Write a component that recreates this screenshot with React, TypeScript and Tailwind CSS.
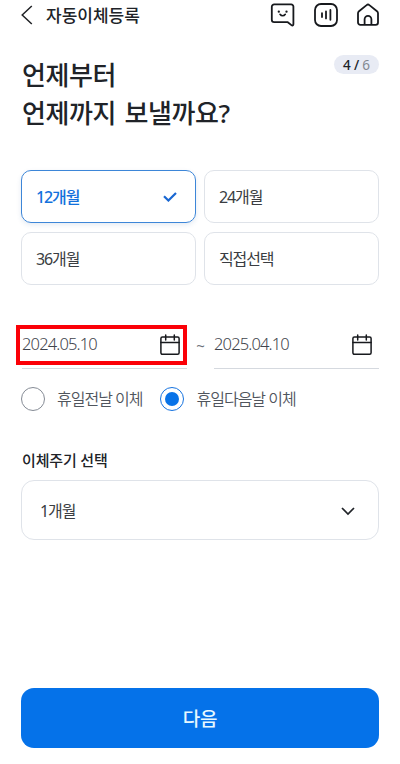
import React, { useState } from 'react';
import clsx from 'clsx';

const PERIODS = ['12개월', '24개월', '36개월', '직접선택'];

const HOLIDAY_OPTIONS = [
  { id: 'before', label: '휴일전날 이체' },
  { id: 'after', label: '휴일다음날 이체' }
];

const BackIcon = () => (
  <svg width="14" height="20" viewBox="0 0 14 20" fill="none" stroke="#202226" strokeWidth="1.5">
    <path d="M10.8 1 1.2 10l9.6 9" />
  </svg>
);

const ChatIcon = () => (
  <svg width="26" height="24" viewBox="0 0 26 24" fill="none" stroke="#17191d" strokeWidth="1.8" strokeLinecap="round" strokeLinejoin="round">
    <path d="M4.2 1.4h17a2.2 2.2 0 0 1 2.2 2.2v17.6c0 1.3-1 1.7-2 .9l-3.6-2.9H4.2a2.4 2.4 0 0 1-2.4-2.4v-13a2.4 2.4 0 0 1 2.4-2.4Z" />
    <path d="M10 11.3c1.4 2 3.9 2 5.3 0" strokeWidth="1.6" />
    <path d="M8.8 8.7h.01M16.5 8.7h.01" strokeWidth="2.3" />
  </svg>
);

const VoiceIcon = () => (
  <svg width="24" height="24" viewBox="0 0 24 24" fill="none" stroke="#17191d" strokeWidth="1.8" strokeLinecap="round">
    <rect x="1" y="1" width="22" height="22" rx="6" />
    <path d="M8 10.2V14M12 8.4v7M16.4 7v9.8" />
  </svg>
);

const HomeIcon = () => (
  <svg width="24" height="24" viewBox="0 0 24 24" fill="none" stroke="#17191d" strokeWidth="1.8" strokeLinejoin="round">
    <path d="M2 10.2c0-.8.4-1.5 1-2l7.6-6.1c.8-.7 2-.7 2.8 0L21 8.2c.6.5 1 1.2 1 2v9.3a2.3 2.3 0 0 1-2.3 2.3H4.3A2.3 2.3 0 0 1 2 19.5Z" />
    <path d="M8.6 21.5v-5.2a3.4 3.4 0 0 1 6.8 0v5.2" />
  </svg>
);

const CalendarIcon = () => (
  <svg width="20" height="22" viewBox="0 0 20 22" fill="none" stroke="#17191d" strokeWidth="1.5" strokeLinecap="round">
    <rect x="0.9" y="3" width="18.2" height="17.3" rx="1.5" />
    <path d="M.9 8.5h18.2M5.7 1v5M14.3 1v5" />
  </svg>
);

const DateField = ({ value }: { value: string }) => (
  <button className="flex h-12 w-[165px] items-center justify-between border-b border-[#d5d9df] pr-[7px] text-left">
    <span className="text-[16.5px] font-light tracking-[-0.85px] text-[#3f444c]">{value}</span>
    <CalendarIcon />
  </button>
);

export default function App() {
  const [period, setPeriod] = useState('12개월');
  const [holiday, setHoliday] = useState('after');

  return (
    <div className="flex h-[764px] w-[400px] flex-col overflow-hidden bg-white font-['Noto_Sans','Noto_Sans_CJK_KR',sans-serif] text-[#202328]">
      {/* Header */}
      <header className="flex h-[30px] items-center justify-between pr-5 pl-[21px]">
        <div className="flex items-center gap-[11px]">
          <BackIcon />
          <h1 className="pt-0.5 text-[17px] leading-6 font-medium">자동이체등록</h1>
        </div>
        <div className="flex items-center gap-[18px]">
          <ChatIcon />
          <VoiceIcon />
          <HomeIcon />
        </div>
      </header>

      {/* Title */}
      <section className="flex items-start justify-between pt-[25px] pr-[21px] pl-[22px]">
        <h2 className="pt-px text-[26px] leading-[38px] font-medium tracking-[-0.4px] [word-spacing:2px]">
          언제부터
          <br />
          언제까지 보낼까요?
        </h2>
        <span className="flex h-[19px] w-[45px] items-center justify-center rounded-full bg-[#e8ebf4] pt-px text-[13.5px]">
          <span className="font-medium tracking-[-0.2px] whitespace-pre">4 / </span>
          <span className="font-normal text-[#858991]">6</span>
        </span>
      </section>

      {/* Period */}
      <section className="mt-[38px] grid grid-cols-2 gap-x-2 gap-y-[9px] px-[21px]">
        {PERIODS.map((item) => (
          <button
            key={item}
            onClick={() => setPeriod(item)}
            className={clsx(
              'flex h-[53px] items-center justify-between rounded-[10px] border pr-[18px] pl-[14px] text-[16px] tracking-[-1.1px]',
              period === item
                ? 'border-[#3d86d8] font-medium text-[#1271dc] shadow-[0_2px_5px_rgba(30,80,150,0.12)]'
                : 'border-[#dfe3e9] font-normal text-[#3a3d42]'
            )}
          >
            {item}
            {period === item && (
              <svg width="14" height="10" viewBox="0 0 14 10" fill="none" stroke="#1967d2" strokeWidth="2.2">
                <path d="m1 4.2 4.4 4.3L13 1" />
              </svg>
            )}
          </button>
        ))}
      </section>

      {/* Dates */}
      <section className="mt-9 flex items-center justify-between pr-[21px] pl-[22px]">
        <div className="relative">
          <DateField value="2024.05.10" />
          <div className="pointer-events-none absolute top-[4px] -left-[6px] h-[40px] w-[171px] border-4 border-[#fb0007]" />
        </div>
        <span className="text-[15px] font-normal text-[#6d727a]">~</span>
        <DateField value="2025.04.10" />
      </section>

      {/* Holiday handling */}
      <section className="mt-[17px] flex items-center gap-[18px] pl-[21px]">
        {HOLIDAY_OPTIONS.map((option) => (
          <button key={option.id} onClick={() => setHoliday(option.id)} className="flex items-center gap-3">
            <span
              className={clsx(
                'flex h-6 w-6 items-center justify-center rounded-full border',
                holiday === option.id ? 'border-[#1673df]' : 'border-[#858b95]'
              )}
            >
              {holiday === option.id && <span className="h-[14px] w-[14px] rounded-full bg-[#0873e8]" />}
            </span>
            <span className="pt-px text-[16px] leading-6 font-[350] tracking-[-1px] text-[#50555d]">{option.label}</span>
          </button>
        ))}
      </section>

      {/* Cycle */}
      <section className="mt-[38px] px-[21px]">
        <h3 className="pl-px text-[15px] leading-[22px] font-medium tracking-[-0.15px]">이체주기 선택</h3>
        <button className="mt-[9px] flex h-[60px] w-full items-center justify-between rounded-[13px] border border-[#dfe3e9] pt-0.5 pr-[23px] pl-[18px] text-[16px] font-normal tracking-[-1.1px] text-[#3a3d42]">
          1개월
          <svg width="14" height="9" viewBox="0 0 14 9" fill="none" stroke="#202328" strokeWidth="1.7">
            <path d="m1 1 6 6 6-6" />
          </svg>
        </button>
      </section>

      <div className="mt-auto px-[21px] pb-4">
        <button className="h-[60px] w-full rounded-[13px] bg-[#0572e9] pt-0.5 text-[19px] font-medium tracking-[-0.3px] text-[#e6f8ff]">
          다음
        </button>
      </div>
    </div>
  );
}
